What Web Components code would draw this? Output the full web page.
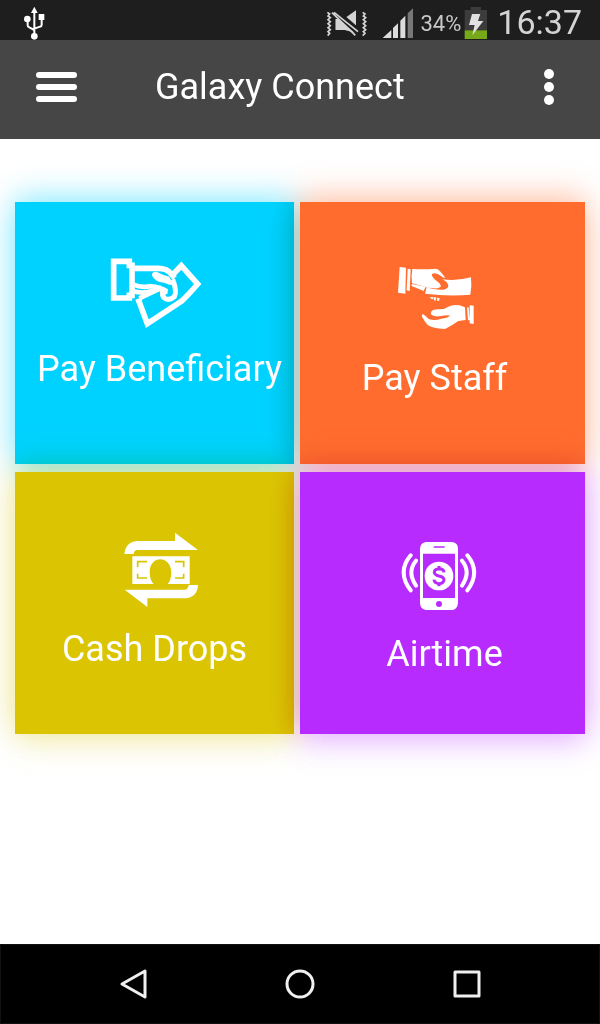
<!DOCTYPE html>
<html lang="en">
<head>
<meta charset="utf-8">
<meta name="viewport" content="width=device-width, initial-scale=1">
<title>Galaxy Connect</title>
<style>
  html, body { margin: 0; background: #fff; }
  body { font-family: Roboto, "Liberation Sans", sans-serif; }
</style>
</head>
<body>
<galaxy-app></galaxy-app>

<template id="status-bar">
  <style>
    :host { display: flex; align-items: flex-end; height: 40px; box-sizing: border-box; padding: 0 18px 0 23px; background: #1e1e1e; color: #d4d4d4; }
    svg { display: block; height: 34px; flex: none; }
    .space { flex: 1; }
    .pct { font-size: 22px; line-height: 32px; margin: 0 3px 0 5px; color: #c8c8c8; }
    .time { font-size: 34px; line-height: 36px; margin-left: 9px; }
    .signal { margin-left: 15px; }
  </style>
  <svg width="23" viewBox="69 18 69 102" fill="#fff" stroke="#fff" role="img" aria-label="USB connected">
    <path d="M103 20l10 19h-20z" stroke="none"/>
    <path d="M103 34v72M83 62v14q0 5 5 6l15 8M125 54v20q0 5-5 6l-17 6" fill="none" stroke-width="6"/>
    <circle cx="82" cy="57" r="10" stroke="none"/><path d="M116 42h17v18h-17z" stroke="none"/>
    <circle cx="103" cy="109" r="10" stroke="none"/>
  </svg>
  <span class="space"></span>
  <svg width="41" viewBox="48 18 123 102" fill="#d4d4d4" role="img" aria-label="Vibrate">
    <path d="M77 57h24L138 31v68l-34-9H77z"/>
    <path d="M72 32l74 64" stroke="#1e1e1e" stroke-width="20"/>
    <path d="M72 37l72 58M66 38l70 68" stroke="#d4d4d4" stroke-width="5"/>
    <path d="M77 58v32h34z"/>
    <path d="M52 37l7 5-5 6 7 5-7 6 7 6-7 6 7 6-7 6 7 6-7 6 5 5-6 7M158 37l7 5-5 6 7 5-7 6 7 6-7 6 7 6-7 6 7 6-7 6 5 5-7 7" fill="none" stroke="#d4d4d4" stroke-width="5"/>
  </svg>
  <svg class="signal" width="33" viewBox="216 18 99 102" fill="#dcdcdc" role="img" aria-label="Signal">
    <path d="M218 114l26-24v24zM249 84l15-14v44h-15zM271 62l15-15v67h-15z"/>
    <path d="M293 40l16-15v89h-16z" fill="#777"/>
  </svg>
  <span class="pct">34%</span>
  <svg width="24" viewBox="462 18 72 102" role="img" aria-label="Charging">
    <path d="M482 21h31v9h18v62h-67V30h18z" fill="#3c3c3c"/>
    <path d="M464 91h67v26h-67z" fill="#76a818"/>
    <path d="M486 42h25l-7 21h16l-33 43 7-31h-17z" fill="#e2e2e2"/>
  </svg>
  <span class="time">16:37</span>
</template>

<template id="app-bar">
  <style>
    :host { display: flex; align-items: center; height: 99px; box-sizing: border-box; padding: 0 46px 6px 36px; background: #464646; color: #fff; }
    button { border: 0; padding: 0; background: none; color: inherit; display: block; flex: none; cursor: pointer; }
    svg { display: block; }
    h1 { flex: 1; margin: 0 0 0 77px; font-size: 36px; line-height: 44px; font-weight: 400; white-space: nowrap; }
  </style>
  <button aria-label="Menu"><svg width="42" height="30" fill="#fff"><rect width="41" height="6" rx="3"/><rect y="12" width="41" height="6" rx="3"/><rect y="24" width="41" height="6" rx="3"/></svg></button>
  <h1><slot></slot></h1>
  <button aria-label="More options"><svg width="10" height="36" fill="#fff"><circle cx="5" cy="5" r="5"/><circle cx="5" cy="18" r="5"/><circle cx="5" cy="31" r="5"/></svg></button>
</template>

<template id="action-tile">
  <style>
    :host { display: block; position: relative; }
    /* The glow multiplies with neighbouring tiles, so it shades them instead of tinting them. */
    :host::before { content: ""; position: absolute; inset: 0; mix-blend-mode: multiply;
      box-shadow: 0 -8px 30px var(--glow), 0 8px 30px var(--glow); }
    button { position: relative; display: flex; flex-direction: column; align-items: center; gap: var(--gap); width: 100%; height: 262px; border: 0; border-radius: 0; margin: 0; box-sizing: border-box;
      padding: var(--top) var(--right, 0) 0 var(--left, 0); background: var(--tile);
      color: #fff; font: 400 36px/44px Roboto, "Liberation Sans", sans-serif; white-space: nowrap; cursor: pointer; }
    ::slotted(svg) { display: block; flex: none; }
  </style>
  <button><slot name="icon"></slot><span><slot></slot></span></button>
</template>

<template id="nav-bar">
  <style>
    :host { display: grid; grid-template-columns: repeat(3, 1fr); align-items: center; justify-items: center; height: 80px; box-sizing: border-box; padding: 0 49px; background: #000; border: 1px solid #111; }
    button { border: 0; padding: 0; background: none; display: block; cursor: pointer; }
    svg { display: block; fill: none; stroke: #f0f0f0; stroke-width: 3; stroke-linejoin: round; }
  </style>
  <button aria-label="Back"><svg width="30" height="32"><path d="M27 3v26L4 16z"/></svg></button>
  <button aria-label="Home"><svg width="30" height="30"><circle cx="15" cy="15" r="13"/></svg></button>
  <button aria-label="Recent apps"><svg width="28" height="28"><path d="M2 2h24v24H2z"/></svg></button>
</template>

<template id="galaxy-app">
  <style>
    :host { display: flex; flex-direction: column; min-height: 100vh; }
    main { flex: 1; padding: 63px 15px; }
    .grid { display: grid; grid-template-columns: 279fr 285fr; gap: 8px 6px; }
    .beneficiary { --tile: #00d2ff; --glow: rgba(0, 210, 255, .32); --top: 46px; --gap: 7px; --left: 10px; }
    .staff { --tile: #ff6c2d; --glow: rgba(255, 108, 45, .3); --top: 56px; --gap: 18px; --right: 16px; }
    .cash { --tile: #dbc503; --glow: rgba(219, 197, 3, .28); --top: 51px; --gap: 12px; }
    .airtime { --tile: #b82bff; --glow: rgba(184, 43, 255, .28); --top: 64px; --gap: 16px; --left: 4px; }
  </style>
  <status-bar></status-bar>
  <app-bar>Galaxy Connect</app-bar>
  <main>
    <div class="grid">
      <action-tile class="beneficiary">
        <svg slot="icon" width="100" height="92" viewBox="48 24 300 276" fill="none" stroke="#fff" stroke-width="17" aria-hidden="true">
          <path d="M59 64h47v12h8v90h-8v8H59z"/>
          <path d="M118 85h74q28 0 40 17l10 12"/>
          <path d="M230 110L262 77 311 132Q282 166 262 184L160 251 132 176"/>
          <path d="M118 134q20 8 40 6 20-3 40 4l12 6M118 154q22 6 42 2l-22 20M136 175l60-28" stroke-width="14"/>
          <path d="M236 118q14 36 5 52-15 14-30 4-8-8-5-22" stroke-width="15"/>
          <path d="M176 98q8-6 18 0 18 10 32 12l12 26q-14-2-28-8-20 0-31-14-8-8-3-16zM190 142q20-4 32 6l-2 14q-14 4-22-6z" fill="#fff" stroke="none"/>
        </svg>
        Pay Beneficiary
      </action-tile>
      <action-tile class="staff">
        <svg slot="icon" width="80" height="80" viewBox="30 24 240 240" fill="#fff" aria-hidden="true">
          <path d="M44 51l19 2-2 78-22-3zM68 57l9 1-3 65-9-2z"/>
          <path d="M82 57q34 2 70-1 8 1 13 8 8 8 16 20-8 0-12-5-10-9-22-9-8 1-6 8 6 11 18 18 10 8 8 14-6 6-20 5-14 0-28-5-18-4-38-10-3-20 1-43z"/>
          <path d="M80 102l42 8-6 13-36-15z"/>
          <path d="M172 88q44 6 86-6 3 28-2 52-64 6-136-3l5-20q18 8 46 8 18-1 19-12-1-10-18-19z"/>
          <path d="M134 141l10 1v6l-6-2zM145 142h8l-1 10-5-1zM155 143l9 1-2 9-5-1z"/>
          <path d="M138 187q2-9 22-9 18 1 30-8 14-8 34-4l16 6 2 38-22 3q-18 13-40 24-38-2-51-11-8-8-18-26-2-8 4-7 10 8 16 14 18 6 38-1 18-2 27-9-10-3-28 1-16 4-28-3-4-4-2-8z"/>
          <path d="M246 173l5-1 3 38-5 1zM254 166l12 1v55l-12-2z"/>
        </svg>
        Pay Staff
      </action-tile>
      <action-tile class="cash">
        <svg slot="icon" width="104" height="92" viewBox="-24 9 312 276" fill="#fff" aria-hidden="true">
          <path d="M40 102q4-36 38-39h114V38l69 52H78q-8 0-10 12z"/>
          <path d="M261 195q-2 37-38 40H109v26L41 209h182q8-2 10-14z"/>
          <path fill-rule="evenodd" d="M64 109h172v83h-66q11-12 11-34c-1-52-64-54-65-2q0 24 12 36H64z"/>
          <path d="M108 125H80v17M80 161v13h28M192 125h26v17M218 161v13h-26" fill="none" stroke="#dbc503" stroke-width="5"/>
        </svg>
        Cash Drops
      </action-tile>
      <action-tile class="airtime">
        <svg slot="icon" width="92" height="80" viewBox="27 18 276 240" fill="#fff" aria-hidden="true">
          <path fill-rule="evenodd" d="M108 36h78q18 2 18 20v164q-2 19-18 20h-78q-17-2-18-20V56q1-18 18-20zM99 71v133h96V71z"/>
          <path d="M133 51h29" stroke="#b82bff" stroke-width="5" stroke-linecap="round"/>
          <circle cx="147" cy="222" r="9" fill="#b82bff"/>
          <circle cx="147" cy="138" r="43"/>
          <path d="M162 127q-1-11-15-11-14 1-14 11 1 8 14 11 15 3 15 12-2 11-15 11-14-1-15-12M147 108v10M147 159v10" fill="none" stroke="#b82bff" stroke-width="9"/>
          <path d="M62 76q-42 50 0 105M78 92q-28 34 0 75M232 76q41 50 0 105M216 92q28 34 0 75" fill="none" stroke="#fff" stroke-width="12" stroke-linecap="round"/>
        </svg>
        Airtime
      </action-tile>
    </div>
  </main>
  <nav-bar></nav-bar>
</template>

<script>
  const define = name => customElements.define(name, class extends HTMLElement {
    constructor() {
      super();
      this.attachShadow({ mode: "open" })
        .append(document.getElementById(name).content.cloneNode(true));
    }
  });
  ["status-bar", "app-bar", "action-tile", "nav-bar", "galaxy-app"].forEach(define);
</script>
</body>
</html>
